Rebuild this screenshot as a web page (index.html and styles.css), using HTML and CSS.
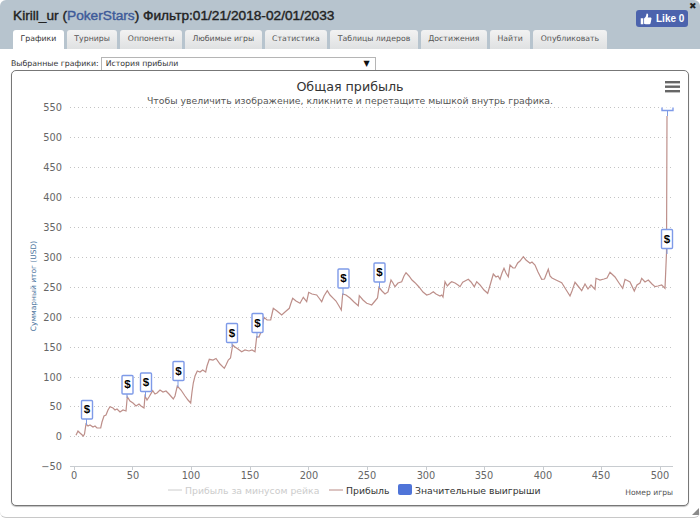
FILE: index.html
```html
<!DOCTYPE html>
<html lang="en">
<head>
  <meta charset="UTF-8">
  <title>Kirill_ur - Графики</title>
  <link rel="stylesheet" href="styles.css">
</head>
<body>

  <div class="dialog">
    <button class="close-btn">&#10006;</button>

    <div class="dialog-header">
      <div class="title-row">
        <h1 class="player-title">Kirill_ur (<span class="room-name">PokerStars</span>) Фильтр:01/21/2018-02/01/2033</h1>
        <div class="like-button">
          <svg class="like-icon" viewBox="0 0 16 16" width="12" height="12">
            <path d="M1 7h3.4v8H1z"/>
            <path d="M5.4 14.2V7.4c1.500-1.400 2.700-3 3-5.200 0-.9.4-1.400 1-1.400 1.200 0 1.800 1.500 1.400 3.200l-.5 2h3.600c1 0 1.600.8 1.400 1.700l-1.200 5.800c-.2.9-.8 1.400-1.700 1.400H7.600c-.9 0-1.500-.3-2.200-.7z"/>
          </svg>
          Like 0
        </div>
      </div>
      <ul class="tabs">
        <li class="tab active">Графики</li>
        <li class="tab">Турниры</li>
        <li class="tab">Оппоненты</li>
        <li class="tab">Любимые игры</li>
        <li class="tab">Статистика</li>
        <li class="tab">Таблицы лидеров</li>
        <li class="tab">Достижения</li>
        <li class="tab">Найти</li>
        <li class="tab">Опубликовать</li>
      </ul>
    </div>

    <div class="dialog-body">
      <div class="chart-picker">
        <span class="picker-label">Выбранные графики:</span>
        <div class="picker-select">
          <span>История прибыли</span>
          <span class="picker-arrow">&#9660;</span>
        </div>
      </div>

      <div class="chart-card">
        <!-- viewBox uses page coordinates so the points are easy to read off -->
        <svg class="chart" viewBox="12 71 676 434" width="676" height="434">
          <text class="chart-title" x="350" y="91">Общая прибыль</text>
          <text class="chart-subtitle" x="350" y="104">Чтобы увеличить изображение, кликните и перетащите мышкой внутрь графика.</text>

          <g class="menu-icon">
            <rect x="665" y="81" width="15" height="2.4"/>
            <rect x="665" y="85.5" width="15" height="2.4"/>
            <rect x="665" y="90" width="15" height="2.4"/>
          </g>

          <g class="grid">
            <line x1="70" x2="673" y1="107.5" y2="107.5"/>
            <line x1="70" x2="673" y1="137.5" y2="137.5"/>
            <line x1="70" x2="673" y1="167.5" y2="167.5"/>
            <line x1="70" x2="673" y1="197.5" y2="197.5"/>
            <line x1="70" x2="673" y1="227.5" y2="227.5"/>
            <line x1="70" x2="673" y1="257.5" y2="257.5"/>
            <line x1="70" x2="673" y1="287.5" y2="287.5"/>
            <line x1="70" x2="673" y1="317.5" y2="317.5"/>
            <line x1="70" x2="673" y1="347.5" y2="347.5"/>
            <line x1="70" x2="673" y1="377.5" y2="377.5"/>
            <line x1="70" x2="673" y1="406.5" y2="406.5"/>
            <line x1="70" x2="673" y1="436.5" y2="436.5"/>
          </g>

          <g class="y-labels">
            <text x="62" y="111">550</text>
            <text x="62" y="141">500</text>
            <text x="62" y="171">450</text>
            <text x="62" y="201">400</text>
            <text x="62" y="231">350</text>
            <text x="62" y="261">300</text>
            <text x="62" y="291">250</text>
            <text x="62" y="321">200</text>
            <text x="62" y="351">150</text>
            <text x="62" y="381">100</text>
            <text x="62" y="410">50</text>
            <text x="62" y="440">0</text>
            <text x="62" y="470">−50</text>
          </g>
          <text class="y-title" transform="translate(36 286) rotate(-90)">Суммарный итог (USD)</text>

          <line class="axis" x1="70" x2="673" y1="466.5" y2="466.5"/>
          <g class="ticks">
            <line x1="74.5" x2="74.5" y1="466" y2="470"/>
            <line x1="132.5" x2="132.5" y1="466" y2="470"/>
            <line x1="191.5" x2="191.5" y1="466" y2="470"/>
            <line x1="250.5" x2="250.5" y1="466" y2="470"/>
            <line x1="308.5" x2="308.5" y1="466" y2="470"/>
            <line x1="367.5" x2="367.5" y1="466" y2="470"/>
            <line x1="426.5" x2="426.5" y1="466" y2="470"/>
            <line x1="484.5" x2="484.5" y1="466" y2="470"/>
            <line x1="543.5" x2="543.5" y1="466" y2="470"/>
            <line x1="601.5" x2="601.5" y1="466" y2="470"/>
            <line x1="660.5" x2="660.5" y1="466" y2="470"/>
          </g>
          <g class="x-labels">
            <text x="74" y="479">0</text>
            <text x="133" y="479">50</text>
            <text x="191" y="479">100</text>
            <text x="250" y="479">150</text>
            <text x="309" y="479">200</text>
            <text x="367" y="479">250</text>
            <text x="426" y="479">300</text>
            <text x="484" y="479">350</text>
            <text x="543" y="479">400</text>
            <text x="601" y="479">450</text>
            <text x="660" y="479">500</text>
          </g>
          <text class="x-title" x="673" y="495">Номер игры</text>

          <polyline class="profit-line" points="76,435.3 78,431 80,433 83.3,436 84.5,434 86,424 88,426 90,425 93,427 95,426 97,428 100.7,428 102,422 104,416 106,415 108,410 110,406.7 113,408 115,410 117,409 120,412 123,410 126,411 127.3,396.7 130,401 133,403 136,406 139,404 141,406 144,408 145,396 147,400 149,397 152.7,390.7 155,394 157,393 160,390 163,392 166,391 169,394 173.3,399 175,396 177.3,386 181,390 185,396 188,400 190.7,403 192,392 193.3,383 195,376 197.3,371 200,372 202.7,370 205.7,372 207,366 209.3,359.3 213,360 216,358.5 220,364 224.3,368.3 226,365 228.3,360 230.5,358 232.7,345 235,347 238,349 241.7,351.7 245,350 249,351 252,350 255,351.7 256.7,336.7 259,337 261,332 264,317.3 267,320 270.7,320 272,314 273.3,308.3 277,311 281.7,315 285,312 289.3,308.3 291,303 292.7,298.3 296,301 300,303.3 303.3,297.3 306.7,301.7 308.7,292.3 312,294 316.7,295 319,298 321.7,301.7 324,296 327.3,290.7 330,295 333.3,298.3 336,301 339,306 341.3,310 342.7,294 346,295 350,298 354,302 358.3,305.7 359.3,295.7 363,300 366.7,303.3 369,304 371.7,305 375,301 377.5,298 379,287.3 382,291 385,294 388,292 391,280 393,283 395,286.7 398,283 401.7,281.7 404,276 406,272.7 409,276 412,280 415,282.7 419,287 423,292 426.7,295 430,294 433.3,291.7 436,294 440,296 441.7,295 443,297 445,281.7 447.3,286 450,283 451.7,281.7 455,283 458,285 460,286.7 462.7,282.3 465,281 468.3,279.3 471,282 474.3,286.7 476.7,281.7 480,285 484,290 487.7,293.3 491,282 493.3,274 496,277 498,276 500,279.3 502,273 504,268.3 506,273 508.3,276.7 510,265 513,268 515,268 517.7,263 520,261 523.3,256.7 526,260 530,263.3 532,262 535,265 538,272 541.7,279.3 544.5,279 546,275 548.3,269.3 550,276 552,278 556,280 561.7,282.7 565,288 570,296 572,291 575,282.3 578,286 581.7,290.7 585,284 588,289 591,285 595,289.3 596,278.3 600,280 604,279 607,278 610,272.3 615,277 619,283 622.7,288.3 625,279.3 630,282 634.3,291 637,285 640,283 641.7,278.3 645,282 648.3,280 652,284 655,286.7 658,286 661.7,285 665,288.3 666.5,253 667,116"/>

          <g class="flag-stems">
            <line x1="86.500" x2="86.500" y1="419" y2="425"/>
            <line x1="127" x2="127" y1="394" y2="398"/>
            <line x1="145.500" x2="145.500" y1="392" y2="397"/>
            <line x1="178" x2="178" y1="381" y2="387"/>
            <line x1="232" x2="232" y1="343" y2="347"/>
            <line x1="257" x2="257" y1="333" y2="338"/>
            <line x1="343" x2="343" y1="288" y2="295"/>
            <line x1="379.500" x2="379.500" y1="282" y2="288"/>
            <line x1="667" x2="667" y1="249" y2="254"/>
            <line x1="667.500" x2="667.500" y1="111" y2="116"/>
          </g>
          <g class="flags">
            <rect x="81.500" y="400.500" width="11" height="18.500" rx="1"/>
            <rect x="122" y="375.500" width="11" height="18.500" rx="1"/>
            <rect x="140.500" y="373" width="11" height="18.500" rx="1"/>
            <rect x="173" y="361.500" width="11" height="19" rx="1"/>
            <rect x="226.500" y="323.500" width="11" height="19" rx="1"/>
            <rect x="252" y="313.500" width="11" height="19" rx="1"/>
            <rect x="338" y="269" width="11" height="19" rx="1"/>
            <rect x="374" y="263" width="11" height="19" rx="1"/>
            <rect x="661.500" y="229.500" width="11" height="19" rx="1"/>
            <path d="M662 107.500v3h11v-3"/>
          </g>
          <g class="flag-labels">
            <text x="87" y="413">$</text>
            <text x="127.500" y="388">$</text>
            <text x="146" y="386">$</text>
            <text x="178.500" y="375">$</text>
            <text x="232" y="337">$</text>
            <text x="257.500" y="327">$</text>
            <text x="343.500" y="282">$</text>
            <text x="379.500" y="276">$</text>
            <text x="667" y="243">$</text>
          </g>

          <g class="legend">
            <line class="legend-off-line" x1="168" x2="182" y1="490" y2="490"/>
            <text class="legend-off" x="185" y="494">Прибыль за минусом рейка</text>
            <line class="legend-line" x1="329" x2="343" y1="490" y2="490"/>
            <text class="legend-text" x="346" y="494">Прибыль</text>
            <rect class="legend-box" x="398" y="484" width="14" height="11" rx="2"/>
            <text class="legend-text" x="415" y="494">Значительные выигрыши</text>
          </g>
        </svg>
      </div>
    </div>

    <div class="resize-grip"></div>
  </div>

</body>
</html>
```

FILE: styles.css
```css
* {
  margin: 0;
  padding: 0;
  box-sizing: border-box;
}

body {
  font-family: "DejaVu Sans", sans-serif;
  background: #ffffff;
  color: #333;
  width: 700px;
  height: 519px;
  overflow: hidden;
}

.dialog {
  position: relative;
  height: 518px;
  background: #ffffff;
  border-bottom: 1px solid #c8c8c8;
  border-radius: 6px;
  overflow: hidden;
}

.close-btn {
  position: absolute;
  top: 0;
  right: 1px;
  width: 12px;
  height: 12px;
  border: none;
  background: none;
  color: #222;
  font-size: 9px;
  line-height: 12px;
}


.dialog-header {
  height: 49px;
  background: #b7c4ce;
  padding: 7px 12px 0 13px;
}

.title-row {
  display: flex;
  justify-content: space-between;
  align-items: flex-start;
  height: 23px;
}

.player-title {
  font-family: "Liberation Sans", Arial, sans-serif;
  font-size: 13.7px;
  font-weight: 400;
  -webkit-text-stroke: 0.4px #222;
  color: #222;
  line-height: 17px;
}

.room-name {
  color: #3d5a99;
  -webkit-text-stroke-color: #3d5a99;
}

.like-button {
  display: flex;
  align-items: center;
  gap: 4px;
  width: 52px;
  height: 17px;
  margin-top: 3px;
  padding-left: 4px;
  background: #4c63ad;
  border-radius: 3px;
  color: #fff;
  font-family: "Liberation Sans", Arial, sans-serif;
  font-size: 10px;
  font-weight: 700;
}

.like-icon {
  fill: #fff;
}


.tabs {
  display: flex;
  gap: 3px;
  list-style: none;
}

.tab {
  height: 19px;
  padding: 0 7.5px;
  background: linear-gradient(#f2f2f2, #dfe1e2);
  border-radius: 3px 3px 0 0;
  color: #555;
  font-size: 7.78px;
  line-height: 18px;
  white-space: nowrap;
}

.tab.active {
  background: #ffffff;
  color: #333;
}


.dialog-body {
  padding: 8px 11px 0;
}

.chart-picker {
  display: flex;
  align-items: center;
  gap: 2px;
  height: 12px;
  margin-bottom: 1px;
  font-size: 7.8px;
}

.picker-select {
  display: flex;
  justify-content: space-between;
  align-items: center;
  width: 275px;
  height: 13px;
  padding: 0 5px 0 4px;
  border: 1px solid #b5b5b5;
  border-bottom: none;
  color: #333;
}

.picker-arrow {
  color: #111;
  font-size: 8px;
}

.chart-card {
  width: 678px;
  height: 436px;
  border: 1px solid #777;
  border-radius: 5px;
  background: #fff;
  box-shadow: 0 1px 1px rgba(0, 0, 0, 0.25);
}

.chart {
  display: block;
}

.chart-title {
  font-size: 12.7px;
  fill: #333;
  text-anchor: middle;
}

.chart-subtitle {
  font-size: 9.3px;
  fill: #555;
  text-anchor: middle;
}

.menu-icon {
  fill: #666;
}

.grid line {
  stroke: #c4c4c4;
  stroke-width: 1;
  stroke-dasharray: 1 3;
}

.y-labels text {
  font-size: 9.8px;
  fill: #666;
  text-anchor: end;
}

.y-title {
  font-size: 7.5px;
  fill: #4d759e;
  text-anchor: middle;
}

.axis,
.ticks line {
  stroke: #c8ccd0;
  stroke-width: 1;
}

.x-labels text {
  font-size: 9.8px;
  fill: #666;
  text-anchor: middle;
}

.x-title {
  font-size: 7.6px;
  fill: #555;
  text-anchor: end;
}

.profit-line {
  fill: none;
  stroke: #bd8f8a;
  stroke-width: 1.2;
}

.flag-stems line {
  stroke: #7f9be0;
  stroke-width: 1;
}

.flags rect,
.flags path {
  fill: #fff;
  stroke: #7e9ae8;
  stroke-width: 1.4;
}

.flag-labels text {
  font-family: "Liberation Sans", Arial, sans-serif;
  font-size: 11.5px;
  font-weight: 700;
  fill: #000;
  text-anchor: middle;
}

.legend text {
  font-size: 9.3px;
}

.legend-off-line {
  stroke: #ccc;
}

.legend-off {
  fill: #ccc;
}

.legend-line {
  stroke: #b98a85;
}

.legend-text {
  fill: #333;
}

.legend-box {
  fill: #4f74d8;
}


.resize-grip {
  position: absolute;
  right: 1px;
  bottom: 2px;
  width: 0;
  height: 0;
  border-left: 7px solid transparent;
  border-bottom: 7px solid #8a8a8a;
}
```
